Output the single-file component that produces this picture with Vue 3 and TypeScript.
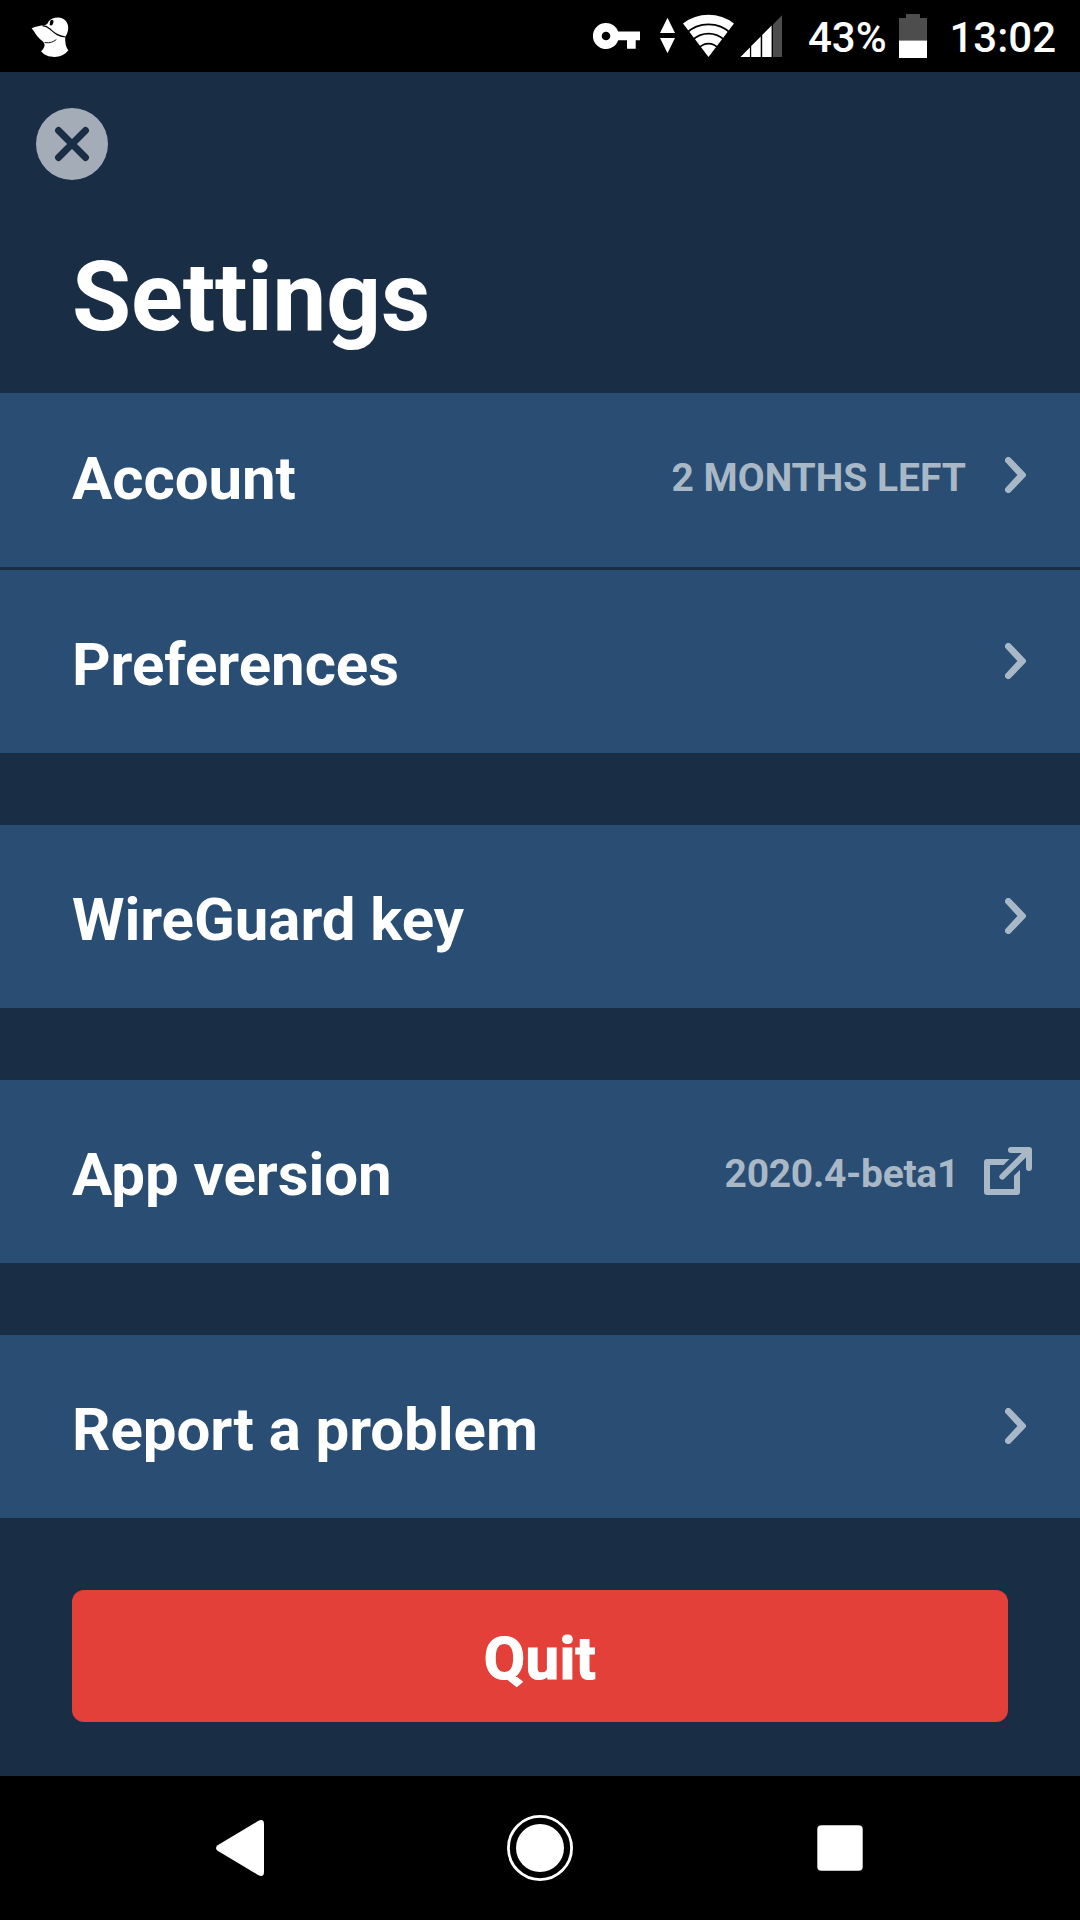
<script setup lang="ts">
type RowKind = 'internal' | 'external'

interface SettingsRow {
  label: string
  info?: string
  kind: RowKind
}

const groups: SettingsRow[][] = [
  [
    { label: 'Account', info: '2 MONTHS LEFT', kind: 'internal' },
    { label: 'Preferences', kind: 'internal' },
  ],
  [{ label: 'WireGuard key', kind: 'internal' }],
  [{ label: 'App version', info: '2020.4-beta1', kind: 'external' }],
  [{ label: 'Report a problem', kind: 'internal' }],
]
</script>

<template>
  <div class="screen">
    <header class="status">
      <svg class="mole" width="40" height="44" viewBox="30 15 40 44">
        <path fill="#fff" d="M31.6 28.2C36 26.2 40 25.6 45 25.2C47 24.5 48 23.5 48.5 21.5C50.5 18.8 54 17.4 58 17.4C64 17.4 68.2 22 68.2 27.5C68.2 31 67.2 34 65.3 36.8C65 41 65.4 46.5 68.4 50.3C65 54.8 60 57 54.5 57C49 57 44 55 41 51.3C43 49.5 44.3 47.5 44.6 45.2C44.4 43.8 44 43 43 41.6C38.5 38.5 35.5 34 33.8 31Z" />
        <path fill="none" stroke="#000" stroke-width="1.2" d="M42.5 25.7C46 26 48 27.3 50 29C54 32.5 57 36 65.5 37" />
        <path fill="none" stroke="#000" stroke-width=".9" stroke-linecap="round" d="M45 42.6C50 43.4 53 42 56 39.8" />
        <ellipse cx="51.6" cy="22.6" rx="1.8" ry="3" transform="rotate(15 51.6 22.6)" />
      </svg>
      <div class="indicators">
        <svg width="47" height="26" viewBox="593 22.5 47 26">
          <path fill="#fff" fill-rule="evenodd" d="M606 22.5a13 13 0 0 1 12.2 8.6H640v8.6h-4.3v8.6H627v-8.6h-8.8A13 13 0 1 1 606 22.5ZM606 31.2a4.3 4.3 0 1 0 0 8.6a4.3 4.3 0 0 0 0-8.6Z" />
        </svg>
        <svg class="wifi" width="75" height="44" viewBox="660 14 75 44">
          <path fill="#fff" d="M667.5 17.7L675 33H660ZM660 38H675L667.5 53.3Z" />
          <path fill="#fff" d="M708.5 57L683 23.4A42.2 42.2 0 0 1 734 23.4Z" />
          <g fill="none" stroke="#000" stroke-width="1.7">
            <path d="M686 33.5A32.5 32.5 0 0 1 731 33.5" />
            <path d="M693 39.5A23.4 23.4 0 0 1 724 39.5" />
            <path d="M699 48A12.5 12.5 0 0 1 718 48" />
          </g>
        </svg>
        <svg class="signal" width="42" height="43" viewBox="740 15 42 43">
          <path fill="#4d4d4d" d="M782 15.2V57H773V24.5Z" />
          <path fill="#fff" d="M740.5 57L749.9 47.4V57ZM751.2 46L760.7 36.5V57H751.2ZM762.2 35L771.6 25.6V57H762.2Z" />
        </svg>
        <span class="percent">43%</span>
        <svg class="battery" width="28" height="44" viewBox="0 0 28 44">
          <path fill="#4d4d4d" d="M7 0H21V4H28V27H0V4H7Z" />
          <path fill="#fff" d="M0 26.6H28V44H0Z" />
        </svg>
        <span class="clock">13:02</span>
      </div>
    </header>

    <main class="content">
      <button class="close" aria-label="Close">
        <svg width="72" height="72" viewBox="0 0 72 72">
          <circle cx="36" cy="36" r="36" fill="#a4adb7" />
          <path d="M22.5 22.5L49.5 49.5M49.5 22.5L22.5 49.5" stroke="#192e45" stroke-width="6.9" stroke-linecap="round" />
        </svg>
      </button>
      <h1 class="title">Settings</h1>

      <nav class="groups">
        <section v-for="(group, g) in groups" :key="g" class="group">
          <div v-for="row in group" :key="row.label" class="row">
            <span class="label">{{ row.label }}</span>
            <span v-if="row.info" class="info" :class="row.kind">{{ row.info }}</span>
            <svg v-if="row.kind === 'internal'" class="chevron" width="22" height="36" viewBox="0 0 22 36">
              <path fill="#a9b8c7" d="M.9 5.6A3.25 3.25 0 0 1 5.7 1L20.3 16.2Q22 18 20.3 19.8L5.7 35A3.25 3.25 0 0 1 .9 30.4L12.4 18Z" />
            </svg>
            <svg v-else class="external-icon" width="48" height="48" viewBox="0 0 48 48">
              <path fill="#a9b8c7" d="M3 12H25.5L19.5 18H6V42H30V28.8L36 22.8V45A3 3 0 0 1 33 48H3A3 3 0 0 1 0 45V15A3 3 0 0 1 3 12Z" />
              <path fill="#a9b8c7" d="M27 0H45A3 3 0 0 1 48 3V21A3 3 0 0 1 42 21V10.2L20.1 32.1A3 3 0 0 1 15.9 27.9L37.8 6H27A3 3 0 0 1 27 0Z" />
            </svg>
          </div>
        </section>
      </nav>

      <button class="quit">Quit</button>
    </main>

    <footer class="navbar">
      <svg width="48" height="56" viewBox="0 0 48 56">
        <path fill="#fff" d="M1.6 25.2L42.5.7Q48-1.5 48 4V52Q48 57.5 42.5 55.3L1.6 30.8Q-1.6 28 1.6 25.2Z" />
      </svg>
      <svg class="home" width="66" height="66" viewBox="0 0 66 66">
        <circle cx="33" cy="33" r="31.6" fill="none" stroke="#fff" stroke-width="2.8" />
        <circle cx="33" cy="33" r="24" fill="#fff" />
      </svg>
      <svg width="46" height="46" viewBox="0 0 46 46">
        <rect x=".3" y=".3" width="45.4" height="45.4" rx="4" fill="#fff" />
      </svg>
    </footer>
  </div>
</template>

<style>
body {
  background: #192e45;
}
</style>

<style scoped>
.screen {
  display: flex;
  flex-direction: column;
  width: 1080px;
  height: 1920px;
  overflow: hidden;
  background: #192e45;
  color: #fff;
  font-family: Roboto, 'Liberation Sans', sans-serif;
}

svg {
  display: block;
  flex: none;
}

.status {
  display: flex;
  justify-content: space-between;
  height: 72px;
  box-sizing: border-box;
  padding: 14px 24px 0 30px;
  background: #000;
}

.mole {
  margin-top: 1px;
}

.indicators {
  display: flex;
  align-items: flex-start;
  font-size: 42px;
  line-height: 48px;
  font-weight: 500;
}

.indicators > svg:first-child {
  margin-top: 8.5px;
}

.wifi {
  margin-left: 20px;
}

.signal {
  margin: 1px 26px 0 5px;
}

.percent {
  width: 78px;
  white-space: nowrap;
}

.battery {
  margin: 0 22px 0 13px;
}

.clock {
  width: 107px;
  text-align: right;
}

.content {
  display: flex;
  flex-direction: column;
  flex: 1;
}

button {
  border: 0;
  padding: 0;
  color: inherit;
  font-family: inherit;
}

.close {
  align-self: flex-start;
  margin: 36px 0 0 36px;
  background: none;
}

.title {
  margin: 61px 72px 0;
  height: 152px;
  font-size: 96px;
  line-height: 112px;
  font-weight: 700;
  letter-spacing: -0.15px;
}

.groups {
  display: flex;
  flex-direction: column;
  gap: 72px;
}

.group {
  display: flex;
  flex-direction: column;
  gap: 3px;
}

.row {
  display: flex;
  align-items: flex-start;
  height: 183px;
  box-sizing: border-box;
  padding: 59px 48px 0 72px;
  background: #294d73;
}

.group:first-child .row:first-child {
  height: 174px;
  padding-top: 50px;
}

.label {
  flex: 1;
  font-size: 60px;
  line-height: 71px;
  font-weight: 700;
  letter-spacing: -0.06px;
}

.info {
  margin-top: 12px;
  color: #a9b8c7;
  font-size: 39px;
  line-height: 46px;
  font-weight: 700;
}

.info.internal {
  margin-right: 39px;
}

.info.external {
  margin-right: 25px;
  letter-spacing: -0.3px;
}

.chevron {
  margin: 14px 5px 0 0;
}

.external-icon {
  margin-top: 8px;
}

.quit {
  margin: 72px 72px 0;
  height: 132px;
  padding-top: 5px;
  border-radius: 12px;
  background: #e34039;
  font-size: 60px;
  line-height: 71px;
  font-weight: 700;
  letter-spacing: 0.3px;
  -webkit-text-stroke: 1.2px #fff;
}

.navbar {
  display: flex;
  align-items: center;
  justify-content: space-between;
  height: 144px;
  box-sizing: border-box;
  padding: 0 217px 0 216px;
  background: #000;
}

.home {
  margin-right: 1px;
}
</style>
